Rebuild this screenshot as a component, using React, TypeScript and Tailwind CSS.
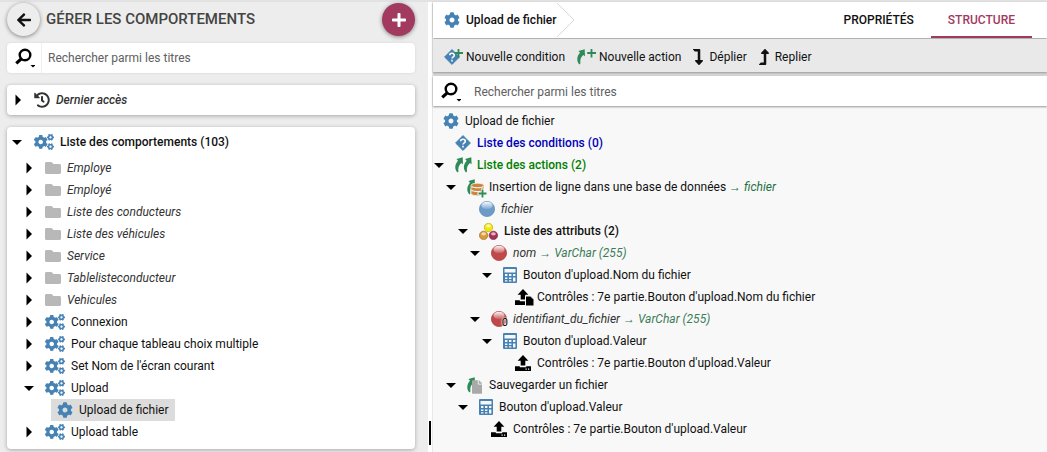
import type { ReactNode } from 'react';
import { FaArrowLeft, FaCog, FaCogs, FaFile, FaFolder, FaHistory, FaLevelDownAlt, FaLevelUpAlt, FaPlus } from 'react-icons/fa';

interface TreeNode {
  label: ReactNode;
  icon: ReactNode;
  open?: boolean;
  labelClass?: string;
  children?: TreeNode[];
}

const SWOOSH = 'M2.300 15.400C-.6 12-.4 7.500 3 3.800L1.500 2 7.700.2 8 7.300 6.300 5.900C3.500 8.500 2.900 11 3.500 14.600Z';

// ---- Icons ----

function Caret({ open = false }: { open?: boolean }) {
  return (
    <svg className="w-3 h-3 shrink-0" viewBox="0 0 12 12" fill="#000">
      {open ? <path d="M1 4h10L6 9Z" /> : <path d="M3.500.6v10.800L9 6Z" />}
    </svg>
  );
}

function SearchIcon() {
  return (
    <svg className="w-5 h-5 shrink-0" viewBox="0 0 20 20">
      <circle cx="10" cy="7" r="5.300" fill="none" stroke="#000" strokeWidth="2.400" />
      <path d="M6.200 10.800 1.300 15.400" stroke="#000" strokeWidth="3.200" />
      <path d="M15.500 17h5l-2.500 2.500Z" fill="#000" />
    </svg>
  );
}

function ConditionIcon({ plus = false }: { plus?: boolean }) {
  return (
    <svg className={plus ? 'w-5 h-4 shrink-0' : 'w-4 h-4 shrink-0'} viewBox={plus ? '0 0 20 16' : '0 0 16 16'}>
      <path d="M8 .6 15.400 8 8 15.400.6 8Z" fill="#4682b4" stroke="#4682b4" strokeLinejoin="round" />
      <path d="M5.700 6.300C5.700 3.600 10.300 3.700 10.300 6.200 10.300 7.800 8 7.800 8 9.600M8 10.700v1.700" fill="none" stroke="#fff" strokeWidth="1.600" />
      {plus && <path d="M14.500 0v8.500M10.500 4h8.500" stroke="#2e8b57" strokeWidth="1.800" />}
    </svg>
  );
}

function NewActionIcon() {
  return (
    <svg className="w-5 h-4 shrink-0" viewBox="0 0 20 16">
      <path d={SWOOSH} fill="#2e8b57" />
      <path d="M14.500 0v8.500M10.200 4h8.800" stroke="#2e8b57" strokeWidth="1.800" />
    </svg>
  );
}

function ActionsIcon() {
  return (
    <svg className="w-4 h-4 shrink-0 overflow-visible" viewBox="0 0 16 16" fill="#2e8b57">
      <path d={SWOOSH} />
      <path d={SWOOSH} transform="translate(8.600 0)" />
    </svg>
  );
}

function InsertIcon() {
  return (
    <svg className="w-4 h-4 shrink-0 overflow-visible" viewBox="0 0 16 16">
      <path d={SWOOSH} fill="#2e8b57" />
      <path d="M4 6.500C4 3.400 17 3.400 17 6.500V14.500C17 17.500 4 17.500 4 14.500Z" fill="#cd853f" stroke="#f8f8f8" strokeWidth=".8" />
      <path d="M4.500 7.400c2 1.800 10 1.800 12 0M4.500 11.200c2 1.800 10 1.800 12 0" fill="none" stroke="#f8f8f8" strokeWidth="1.100" />
      <path d="M15.500 9.500v9.500M10.500 14.500h10" stroke="#f8f8f8" strokeWidth="3" />
      <path d="M15.500 10.500v8M11.500 14.500h8" stroke="#2e8b57" strokeWidth="1.800" />
    </svg>
  );
}

function SaveIcon() {
  return (
    <span className="relative w-4 h-4 shrink-0">
      <svg className="w-4 h-4" viewBox="0 0 16 16">
        <path d={SWOOSH} fill="#2e8b57" />
      </svg>
      <FaFile className="absolute left-[5px] top-[3px] w-2.5 h-3.5 text-[#a9a9a9]" />
    </span>
  );
}

function Ball({ color, badge }: { color: 'blue' | 'red'; badge?: string }) {
  const fill = color === 'blue' ? '#6c9bc8' : '#c04848';
  const edge = color === 'blue' ? '#5c8ab8' : '#a83c3c';
  const id = `ball-${color}-${badge ?? 'plain'}`;
  return (
    <span className="relative w-4 h-4 shrink-0">
      <svg className="w-4 h-4" viewBox="0 0 16 16">
        <defs>
          <linearGradient id={id} x1="0" y1="0" x2="0" y2="1">
            <stop offset="0" stopColor="#fff" stopOpacity=".95" />
            <stop offset="1" stopColor="#fff" stopOpacity=".1" />
          </linearGradient>
        </defs>
        <circle cx="8" cy="8" r="7.600" fill={fill} stroke={edge} strokeWidth=".7" />
        <ellipse cx="8" cy="4.500" rx="5.500" ry="3.800" fill={`url(#${id})`} />
      </svg>
      {badge && (
        <span className="absolute -right-px top-1.5 text-[11px] leading-3 text-black [text-shadow:0_0_1px_#fff,0_0_2px_#fff,0_0_2px_#fff]">{badge}</span>
      )}
    </span>
  );
}

const ATTRIBUTE_BALLS = [
  { cx: 9.5, cy: 4.5, fill: '#f2e60c', edge: '#b8a800' },
  { cx: 4.6, cy: 12.4, fill: '#dc9a38', edge: '#9c6414' },
  { cx: 14.4, cy: 12.4, fill: '#a83058', edge: '#701838' },
];

function AttributesIcon() {
  return (
    <svg className="w-[19px] h-[17px] shrink-0" viewBox="0 0 19 17">
      {ATTRIBUTE_BALLS.map(b => (
        <g key={b.fill}>
          <circle cx={b.cx} cy={b.cy} r="4.200" fill={b.fill} stroke={b.edge} strokeWidth=".6" />
          <ellipse cx={b.cx} cy={b.cy - 1.6} rx="2.400" ry="1.600" fill="#fff" opacity=".65" />
        </g>
      ))}
    </svg>
  );
}

function CalcIcon() {
  return (
    <svg className="w-3.5 h-4 shrink-0" viewBox="0 0 14 16">
      <rect width="14" height="16" rx="1" fill="#4682b4" />
      <path d="M1.500 2h11v3.500h-11ZM2 7h2.400v2H2ZM6 7h2.400v2H6ZM10 7h2.400v2H10ZM2 10.500h2.400v1.500H2ZM6 10.500h2.400v1.500H6ZM10 10.500h2.400v4H10ZM2 13.200h2.400v1.300H2ZM6 13.200h2.400v1.300H6Z" fill="#f8f8f8" />
    </svg>
  );
}

function UploadIcon({ file = false }: { file?: boolean }) {
  return (
    <svg className="w-4 h-4 shrink-0 overflow-visible" viewBox="0 0 16 16">
      <path d="M8 0 13.400 5.800H10.300V10.500H5.700V5.800H2.600ZM0 11.200h4.800v1h6.400v-1H16V16H0Z" fill="#000" />
      {file ? (
        <path d="M10.500 7h5l3.500 3.500V17h-8.500Z" fill="#000" stroke="#f8f8f8" />
      ) : (
        <path d="M10.500 13.500h1.200v1.200h-1.200ZM13 13.500h1.200v1.200H13Z" fill="#f8f8f8" />
      )}
    </svg>
  );
}

const cog = <FaCog className="w-4 h-4 shrink-0 text-[#4682b4]" />;
const cogs = <FaCogs className="w-5 h-4 shrink-0 text-[#4682b4]" />;
const folder = <FaFolder className="w-4 h-4 shrink-0 text-[#b8b8b8]" />;
const arrow = <span className="font-['Liberation_Sans',sans-serif] not-italic">→</span>;

// ---- Data ----

const folders = ['Employe', 'Employé', 'Liste des conducteurs', 'Liste des véhicules', 'Service', 'Tablelisteconducteur', 'Vehicules'];
const behaviours = ['Connexion', 'Pour chaque tableau choix multiple', "Set Nom de l'écran courant", 'Upload', 'Upload table'];

const structure: TreeNode[] = [
  { label: 'Liste des conditions (0)', icon: <ConditionIcon />, labelClass: 'font-medium text-[#0000b8]' },
  {
    label: 'Liste des actions (2)',
    icon: <ActionsIcon />,
    labelClass: 'font-medium text-[#008000]',
    open: true,
    children: [
      {
        label: <>Insertion de ligne dans une base de données <em className="text-[#1e7145]">{arrow} fichier</em></>,
        icon: <InsertIcon />,
        open: true,
        children: [
          { label: 'fichier', icon: <Ball color="blue" />, labelClass: 'italic text-[#333]' },
          {
            label: 'Liste des attributs (2)',
            icon: <AttributesIcon />,
            labelClass: 'font-medium',
            open: true,
            children: [
              {
                label: <>nom <span className="text-[#3c7d58]">{arrow} VarChar (255)</span></>,
                icon: <Ball color="red" />,
                labelClass: 'italic text-[#333]',
                open: true,
                children: [
                  {
                    label: "Bouton d'upload.Nom du fichier",
                    icon: <CalcIcon />,
                    open: true,
                    children: [{ label: "Contrôles : 7e partie.Bouton d'upload.Nom du fichier", icon: <UploadIcon file /> }],
                  },
                ],
              },
              {
                label: <>identifiant_du_fichier <span className="text-[#3c7d58]">{arrow} VarChar (255)</span></>,
                icon: <Ball color="red" badge="0" />,
                labelClass: 'italic text-[#333]',
                open: true,
                children: [
                  {
                    label: "Bouton d'upload.Valeur",
                    icon: <CalcIcon />,
                    open: true,
                    children: [{ label: "Contrôles : 7e partie.Bouton d'upload.Valeur", icon: <UploadIcon /> }],
                  },
                ],
              },
            ],
          },
        ],
      },
      {
        label: 'Sauvegarder un fichier',
        icon: <SaveIcon />,
        open: true,
        children: [
          {
            label: "Bouton d'upload.Valeur",
            icon: <CalcIcon />,
            open: true,
            children: [{ label: "Contrôles : 7e partie.Bouton d'upload.Valeur", icon: <UploadIcon /> }],
          },
        ],
      },
    ],
  },
];

// ---- Panels ----

function Branch({ nodes }: { nodes: TreeNode[] }) {
  return (
    <ul>
      {nodes.map((node, i) => (
        <li key={i}>
          <div className="flex items-center h-[22px] whitespace-nowrap">
            {node.children ? (
              <button type="button" aria-label="Replier" aria-expanded={node.open} className="w-3 mr-2.5 shrink-0">
                <Caret open={node.open} />
              </button>
            ) : (
              <span className="w-3 mr-2.5 shrink-0" />
            )}
            {node.icon}
            <span className={`ml-1.5 ${node.labelClass ?? ''}`}>{node.label}</span>
          </div>
          {node.children && (
            <div className="pl-3">
              <Branch nodes={node.children} />
            </div>
          )}
        </li>
      ))}
    </ul>
  );
}

function SideRow({ icon, label, open, italic }: { icon: ReactNode; label: string; open?: boolean; italic?: boolean }) {
  return (
    <div className="flex items-center h-[22px] whitespace-nowrap">
      <button type="button" aria-label={`Basculer ${label}`} aria-expanded={!!open} className="w-3 mr-2.5 shrink-0">
        <Caret open={open} />
      </button>
      {icon}
      <span className={italic ? 'ml-1.5 italic text-[#333]' : 'ml-1.5'}>{label}</span>
    </div>
  );
}

function Sidebar() {
  return (
    <aside className="flex-1 min-w-0 bg-[#ededed] pl-[7px] pr-[13px] pb-[3px]">
      <header className="flex items-center pt-px pb-[7px]">
        <button type="button" aria-label="Retour" className="flex items-center justify-center w-[33px] h-[33px] shrink-0 rounded-full bg-[#ededed] shadow-[0_1px_4px_rgba(0,0,0,0.45)]">
          <FaArrowLeft className="w-4 h-4" />
        </button>
        <h1 className="ml-1.5 text-[15px] font-medium text-[#444] whitespace-nowrap">GÉRER LES COMPORTEMENTS</h1>
        <button type="button" aria-label="Ajouter" className="flex items-center justify-center w-[33px] h-[33px] ml-auto shrink-0 rounded-full bg-[#a23a60] text-white shadow-[0_1px_4px_rgba(0,0,0,0.45)]">
          <FaPlus className="w-4 h-4" />
        </button>
      </header>

      <div className="flex items-center h-[30px] rounded bg-white shadow-[0_0_3px_rgba(0,0,0,0.1)]">
        <button type="button" aria-label="Options de recherche" className="flex items-center justify-center w-[35px] h-full pl-px border-r border-[#f0f0f0]">
          <SearchIcon />
        </button>
        <input type="text" aria-label="Rechercher un comportement" placeholder="Rechercher parmi les titres" className="flex-1 min-w-0 px-1.5 outline-none placeholder:text-[#606060]" />
      </div>

      <section className="flex items-center h-[30px] mt-3 px-[5px] rounded bg-white shadow-[0_1px_4px_rgba(0,0,0,0.3)]">
        <button type="button" aria-label="Basculer Dernier accès" aria-expanded="false" className="w-3 mr-2.5">
          <Caret />
        </button>
        <FaHistory className="w-4 h-4 text-[#333]" />
        <h2 className="ml-1.5 font-medium italic text-[#333]">Dernier accès</h2>
      </section>

      <section className="mt-3 pt-px pb-1.5 px-[4px] rounded bg-white shadow-[0_1px_4px_rgba(0,0,0,0.3)]">
        <div className="flex items-center h-7 mb-px">
          <button type="button" aria-label="Basculer la liste" aria-expanded="true" className="w-3 mr-[11px]">
            <Caret open />
          </button>
          {cogs}
          <h2 className="ml-1.5 font-medium whitespace-nowrap">Liste des comportements (103)</h2>
        </div>
        <ul className="pl-3">
          {folders.map(name => (
            <li key={name}>
              <SideRow icon={folder} label={name} italic />
            </li>
          ))}
          {behaviours.map(name => (
            <li key={name}>
              <SideRow icon={cogs} label={name} open={name === 'Upload'} />
              {name === 'Upload' && (
                <div className="pl-7">
                  <a href="#upload" className="inline-flex items-center h-[22px] px-1.5 align-top bg-[#dcdcdc]">
                    {cog}
                    <span className="ml-1.5 whitespace-nowrap">Upload de fichier</span>
                  </a>
                </div>
              )}
            </li>
          ))}
        </ul>
      </section>
    </aside>
  );
}

function StructurePanel() {
  return (
    <main className="min-w-0 flex flex-col bg-[#f8f8f8]">
      <header className="flex items-stretch h-9 pl-[11px] pr-[15px] bg-white shadow-[0_1px_2px_rgba(0,0,0,0.4)]">
        <nav aria-label="Fil d'Ariane" className="flex items-center">
          {cog}
          <span className="ml-1.5 font-medium whitespace-nowrap">Upload de fichier</span>
          <svg className="w-5 h-9" viewBox="0 0 20 36" fill="none" stroke="#d8d8d8">
            <path d="M-1 0 17 18-1 36" />
          </svg>
        </nav>
        <div role="tablist" className="flex ml-auto">
          <button type="button" role="tab" aria-selected="false" className="px-[17px] pt-0.5 font-medium border-b-2 border-transparent">PROPRIÉTÉS</button>
          <button type="button" role="tab" aria-selected="true" className="px-[17px] pt-0.5 font-medium text-[#a23a60] border-b-2 border-[#a23a60]">STRUCTURE</button>
        </div>
      </header>

      <div className="bg-[#d8d8d8] pb-1 mt-px">
        <div role="toolbar" className="flex items-center gap-3 h-[33px] pt-[3px] pl-[11px] bg-[#e9e9e9] whitespace-nowrap shadow-[0_1px_2px_rgba(0,0,0,0.3)]">
          <button type="button" className="flex items-center gap-0.5"><ConditionIcon plus />Nouvelle condition</button>
          <button type="button" className="flex items-center gap-0.5"><NewActionIcon />Nouvelle action</button>
          <button type="button" className="flex items-center gap-1.5"><FaLevelDownAlt className="w-2.5 h-4" />Déplier</button>
          <button type="button" className="flex items-center gap-1.5"><FaLevelUpAlt className="w-2.5 h-4" />Replier</button>
        </div>
      </div>

      <div className="flex items-center h-[30px] pl-2 pt-px bg-white shadow-[0_1px_2px_rgba(0,0,0,0.4)]">
        <button type="button" aria-label="Options de recherche">
          <SearchIcon />
        </button>
        <input type="text" aria-label="Rechercher dans la structure" placeholder="Rechercher parmi les titres" className="flex-1 min-w-0 pl-[13px] outline-none placeholder:text-[#606060]" />
      </div>

      <div className="flex-1 pt-1 pb-3">
        <div className="flex items-center h-[22px] pl-2.5">
          {cog}
          <span className="ml-1.5">Upload de fichier</span>
        </div>
        <Branch nodes={structure} />
      </div>
    </main>
  );
}

export default function App() {
  return (
    <div className="grid grid-cols-[433fr_614fr] min-h-screen border-t-2 border-[#e2e2e2] bg-white font-['Roboto',sans-serif] text-xs text-[#111]">
      <div className="flex">
        <Sidebar />
        {/* Splitter between the two panels */}
        <div className="flex flex-col justify-end items-center w-[5px] pb-[7px] bg-white border-r border-[#e8e8e8]">
          <span className="w-0.5 h-6 bg-black" />
        </div>
      </div>
      <StructurePanel />
    </div>
  );
}
